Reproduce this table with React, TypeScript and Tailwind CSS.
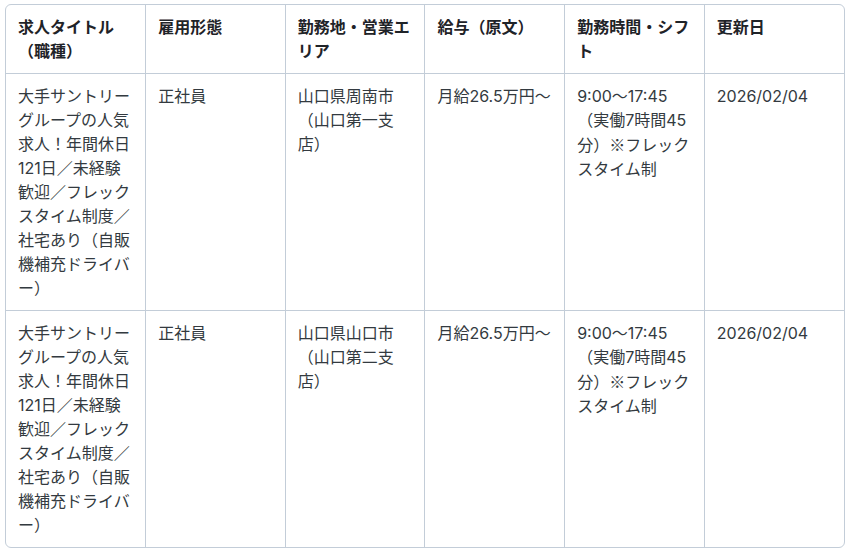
import React from 'react';

const headers = ['求人タイトル（職種）', '雇用形態', '勤務地・営業エリア', '給与（原文）', '勤務時間・シフト', '更新日'];

const title =
  '大手サントリーグループの人気求人！年間休日121日／未経験歓迎／フレックスタイム制度／社宅あり（自販機補充ドライバー）';

const rows = [
  [title, '正社員', '山口県周南市（山口第一支店）', '月給26.5万円〜', '9:00〜17:45（実働7時間45分）※フレックスタイム制', '2026/02/04'],
  [title, '正社員', '山口県山口市（山口第二支店）', '月給26.5万円〜', '9:00〜17:45（実働7時間45分）※フレックスタイム制', '2026/02/04'],
];

// Inter has its own small ※, use the CJK one like the original
function renderCell(text: string) {
  const parts = text.split('※');
  if (parts.length === 1) return text;
  return (
    <>
      {parts[0]}
      <span className="font-['Noto_Sans_CJK_JP',sans-serif]">※</span>
      {parts[1]}
    </>
  );
}

export default function App() {
  return (
    <div className="min-h-screen bg-white px-[5px] pt-1 font-['Inter','Noto_Sans_CJK_JP',sans-serif]">
      <div className="overflow-hidden rounded-md border border-[#c3cdd8]">
        <table className="w-full table-fixed border-collapse text-left text-base leading-6">
          <thead>
            <tr>
              {headers.map((h, i) => (
                <th
                  key={h}
                  className={
                    'border-b border-[#c3cdd8] px-3 py-2.5 align-top font-bold text-[#1f2328] ' +
                    (i < headers.length - 1 ? 'border-r' : '')
                  }
                >
                  {h}
                </th>
              ))}
            </tr>
          </thead>
          <tbody>
            {rows.map((row, r) => (
              <tr key={r}>
                {row.map((cell, i) => (
                  <td
                    key={i}
                    className={
                      'border-[#c3cdd8] px-3 py-2.5 align-top text-[#333a40] ' +
                      (i < row.length - 1 ? 'border-r ' : '') +
                      (r < rows.length - 1 ? 'border-b' : '')
                    }
                  >
                    {renderCell(cell)}
                  </td>
                ))}
              </tr>
            ))}
          </tbody>
        </table>
      </div>
    </div>
  );
}
